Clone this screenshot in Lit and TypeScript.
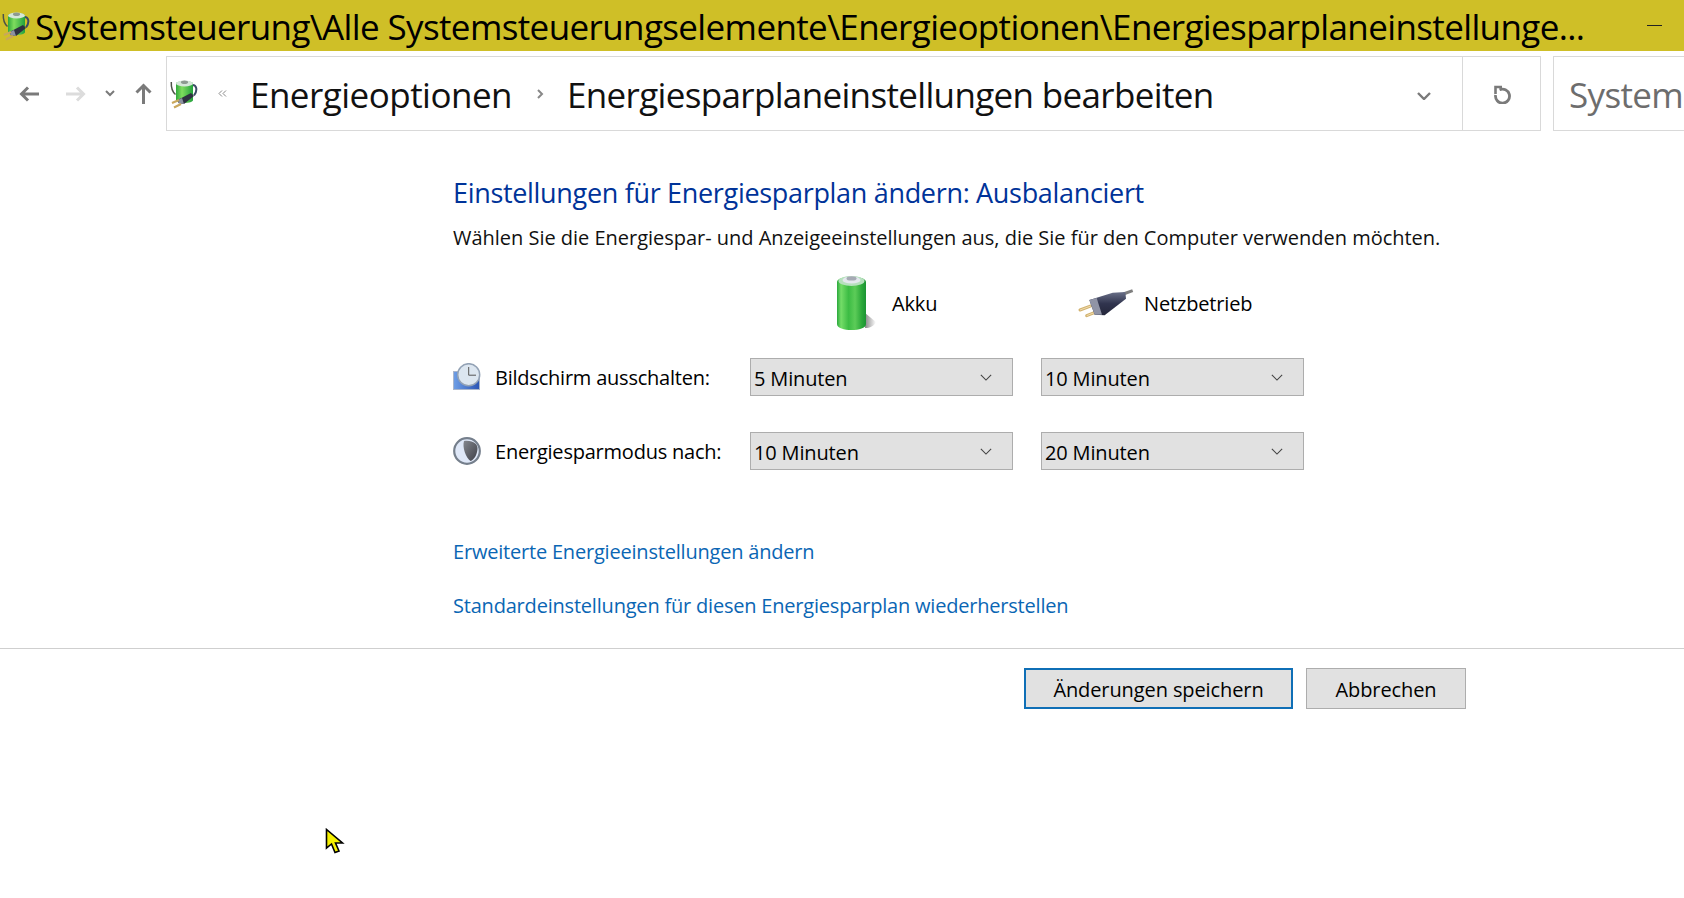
import { LitElement, html, css } from "lit";
import { customElement } from "lit/decorators.js";

const powerIcon = (id: string) => html`<svg width="28" height="30" viewBox="0 0 28 30">
  <defs>
    <linearGradient id="pb${id}" x1="0" x2="1" y1="0" y2="0"><stop offset="0" stop-color="#2fa83a"/><stop offset=".35" stop-color="#7fdc5e"/><stop offset="1" stop-color="#22a03c"/></linearGradient>
  </defs>
  <path d="M1.3 3 C1 9 2.5 13 5.5 15.5" fill="none" stroke="#4d5248" stroke-width="1.5"/>
  <path d="M22 6 C26.5 5.5 28 11 24 16.5" fill="none" stroke="#3c4a66" stroke-width="2"/>
  <path d="M6 4.5 C6 1.5 23 1.5 23 4.5 L23 21 C23 25 6 25 6 21 Z" fill="url(#pb${id})"/>
  <ellipse cx="14.5" cy="4.5" rx="8.5" ry="3" fill="#d5e6d8"/>
  <ellipse cx="14.5" cy="3.2" rx="3.6" ry="1.8" fill="#8d9a90"/>
  <path d="M8.5 20.5 L21 14 L24 17 L14 25 L8 24 Z" fill="#2e3140"/>
  <path d="M9 20.5 L12 19 L14 25 L8 24 Z" fill="#8c91a0"/>
  <path d="M2 24 L9 21 M4 28.5 L11 25" stroke="#c9a75c" stroke-width="2.2"/>
</svg>`;

@customElement("app-root")
export class AppRoot extends LitElement {
  static styles = css`
    :host { display: block; width: 1684px; height: 898px; overflow: hidden; position: relative; background: #fff;
      font-family: "Open Sans", "Noto Sans", sans-serif; color: #000; }
    .title { height: 51px; background: #cfbf27; display: flex; align-items: center; padding-left: 2px; box-sizing: border-box; }
    .title svg { flex: none; }
    .title .t { font-size: 35px; margin-left: 5px; white-space: nowrap; flex: 1; line-height: 51px; letter-spacing: -0.62px; padding-top: 2px; }
    .min { width: 15px; height: 1px; background: #222; margin-right: 22px; flex: none; }
    .nav { height: 75px; margin-top: 5px; display: flex; align-items: stretch; }
    .btns { width: 166px; flex: none; display: flex; align-items: center; padding-left: 19px; box-sizing: border-box; }
    .btns svg { flex: none; }
    .addr { width: 1375px; box-sizing: border-box; border: 1px solid #d9d9d9; display: flex; align-items: center; flex: none; }
    .crumbs { flex: 1; display: flex; align-items: center; padding-left: 3px; }
    .crumb { font-size: 35px; letter-spacing: -0.52px; white-space: nowrap; color: #111; padding-top: 2px; }
    .crumb.long { letter-spacing: -0.66px; }
    .dd { width: 77px; flex: none; align-self: stretch; border-left: 1px solid #d9d9d9; display: flex; align-items: center; justify-content: center; }
    .ddown { flex: none; margin-right: 31px; }
    .search { margin-left: 12px; flex: 1; border: 1px solid #d9d9d9; border-right: none; font-size: 35px; color: #6d6d6d; padding: 2px 0 0 15px; display: flex; align-items: center; overflow: hidden; white-space: nowrap; letter-spacing: -0.66px; }
    .main { padding: 44px 0 0 453px; }
    h1 { margin: 0; font-size: 27px; font-weight: 400; color: #003399; line-height: 36px; letter-spacing: -0.32px; }
    .desc { font-size: 20px; line-height: 28px; margin-top: 13px; letter-spacing: -0.02px; white-space: nowrap; color: #111; }
    .grid { display: grid; grid-template-columns: 269px 263px 263px; column-gap: 28px; margin-top: 23px; align-items: center; font-size: 20px; letter-spacing: -0.15px; width: max-content; }
    .head { height: 56px; display: flex; align-items: center; margin-bottom: 27px; }
    .h1c { padding-left: 86px; gap: 14px; }
    .h2c { padding-left: 37px; gap: 10px; }
    .label { display: flex; align-items: center; gap: 14px; height: 38px; white-space: nowrap; letter-spacing: -0.22px; }
    .label span { padding-top: 1px; }
    .sel { height: 38px; box-sizing: border-box; background: #e1e1e1; border: 1px solid #adadad; display: flex; align-items: center; justify-content: space-between; padding: 0 20px 0 3px; }
    .sel span { padding-top: 2px; }
    .r2 { margin-top: 36px; }
    .links { margin-top: 68px; display: flex; flex-direction: column; gap: 26px; }
    .links a { color: #0a66b4; font-size: 20px; line-height: 28px; letter-spacing: -0.2px; }
    .rule { height: 1px; background: #cfcfcf; margin-top: 28px; }
    .foot { display: flex; padding: 19px 0 0 1024px; gap: 13px; }
    .b { height: 41px; box-sizing: border-box; background: #e1e1e1; border: 1px solid #adadad; display: flex; align-items: center; justify-content: center; font-size: 20px; letter-spacing: -0.1px; width: 160px; padding-top: 1px; }
    .b.p { width: 269px; border: 2px solid #0f6fb6; }
    .cursor { position: absolute; left: 325px; top: 828px; }
  `;

  private chev(w: number, h: number, color: string, sw: number) {
    return html`<svg width=${w} height=${h} viewBox="0 0 14 8"><path d="M1 1 L7 7 L13 1" fill="none" stroke=${color} stroke-width=${sw}/></svg>`;
  }

  private select(v: string) {
    return html`<div class="sel"><span>${v}</span>${this.chev(12, 7, "#444", 1.3)}</div>`;
  }

  render() {
    return html`
      <div class="title">
        ${powerIcon("a")}
        <div class="t">Systemsteuerung\\Alle Systemsteuerungselemente\\Energieoptionen\\Energiesparplaneinstellunge...</div>
        <div class="min"></div>
      </div>
      <div class="nav">
        <div class="btns">
          <svg width="21" height="16" viewBox="0 0 21 16"><path d="M20 8 H3 M9 1.5 L2.5 8 L9 14.5" fill="none" stroke="#7a7a7a" stroke-width="3"/></svg>
          <svg style="margin-left:25px" width="21" height="16" viewBox="0 0 21 16"><path d="M1 8 H18 M12 1.5 L18.5 8 L12 14.5" fill="none" stroke="#dcdcdc" stroke-width="3"/></svg>
          <svg style="margin-left:19px" width="10" height="7" viewBox="0 0 10 7"><path d="M1 1 L5 5 L9 1" fill="none" stroke="#7a7a7a" stroke-width="2"/></svg>
          <svg style="margin-left:20px" width="17" height="21" viewBox="0 0 17 21"><path d="M8.5 21 V3 M1.5 9.5 L8.5 2.5 L15.5 9.5" fill="none" stroke="#7a7a7a" stroke-width="3"/></svg>
        </div>
        <div class="addr">
          <div class="crumbs">
            ${powerIcon("b")}
            <svg style="margin-left:20px" width="9" height="7" viewBox="0 0 9 7"><path d="M4 .5 L1 3.5 L4 6.5 M8 .5 L5 3.5 L8 6.5" fill="none" stroke="#888" stroke-width="1"/></svg>
            <span class="crumb" style="margin-left:23px">Energieoptionen</span>
            <svg style="margin-left:24px" width="8" height="10" viewBox="0 0 8 10"><path d="M2 1 L6 5 L2 9" fill="none" stroke="#888" stroke-width="2"/></svg>
            <span class="crumb long" style="margin-left:23px">Energiesparplaneinstellungen bearbeiten</span>
          </div>
          <div class="ddown">${this.chev(14, 8, "#7a7a7a", 2.4)}</div>
          <div class="dd"><svg width="20" height="20" viewBox="0 0 20 20"><path d="M7.5 5.8 A7 7 0 1 1 3.6 11" fill="none" stroke="#7a7a7a" stroke-width="2.8"/><path d="M3.5 10 V3 H10" fill="none" stroke="#7a7a7a" stroke-width="2.6"/></svg></div>
        </div>
        <div class="search">Systemsteuerung durchsuchen</div>
      </div>
      <div class="main">
        <h1>Einstellungen für Energiesparplan ändern: Ausbalanciert</h1>
        <div class="desc">Wählen Sie die Energiespar- und Anzeigeeinstellungen aus, die Sie für den Computer verwenden möchten.</div>
        <div class="grid">
          <div class="head"></div>
          <div class="head h1c">
            <svg width="42" height="56" viewBox="0 0 42 56">
              <defs>
                <linearGradient id="bat" x1="0" x2="1" y1="0" y2="0"><stop offset="0" stop-color="#2aa83c"/><stop offset=".14" stop-color="#74dd68"/><stop offset=".4" stop-color="#3cbc44"/><stop offset=".62" stop-color="#5ccc58"/><stop offset=".85" stop-color="#2ca93a"/><stop offset="1" stop-color="#1a9433"/></linearGradient>
                <linearGradient id="sh" x1="0" x2="1" y1="0" y2="0"><stop offset="0" stop-color="#8a8a8a"/><stop offset="1" stop-color="#fff"/></linearGradient>
              </defs>
              <path d="M29 38 L40 47 C38 51 34 53 29 53 Z" fill="url(#sh)"/>
              <path d="M1 7 C1 0 30 0 30 7 L30 49 C30 57 1 57 1 49 Z" fill="url(#bat)"/>
              <ellipse cx="15.5" cy="6" rx="13" ry="5" fill="#b6e0bd"/>
              <ellipse cx="15.5" cy="5" rx="9" ry="3.6" fill="#e4e8ee"/>
              <ellipse cx="15.5" cy="3.4" rx="5" ry="2.2" fill="#a6aab4"/>
            </svg>
            <span>Akku</span>
          </div>
          <div class="head h2c">
            <svg width="56" height="30" viewBox="24 22 168 90">
              <defs><linearGradient id="plug" x1="0" x2="0" y1="0" y2="1"><stop offset="0" stop-color="#6a7088"/><stop offset=".5" stop-color="#30344e"/><stop offset="1" stop-color="#24263a"/></linearGradient></defs>
              <path d="M160 40 L188 30" stroke="#7e7e7e" stroke-width="9"/>
              <path d="M65 75 L30 88 M75 95 L50 105" stroke="#d2b26e" stroke-width="9" stroke-linecap="round"/>
              <path d="M65 75 L30 88 M75 95 L50 105" stroke="#f0dcb0" stroke-width="3"/>
              <path d="M58 58 L128 36 L166 34 L168 54 L104 104 L74 102 Z" fill="url(#plug)"/>
              <path d="M58 58 L80 52 L96 102 L74 102 Z" fill="#9094a6"/>
            </svg>
            <span>Netzbetrieb</span>
          </div>
          <div class="label">
            <svg width="28" height="28" viewBox="0 0 28 28">
              <defs><linearGradient id="scr" x1="0" x2="1" y1="0" y2="0"><stop offset="0" stop-color="#6f9fe6"/><stop offset="1" stop-color="#2a54b4"/></linearGradient></defs>
              <rect x=".5" y="8.5" width="26" height="18" fill="url(#scr)" stroke="#aab6cc"/>
              <circle cx="15.7" cy="11.7" r="11" fill="#dce6f0" stroke="#93a2b5" stroke-width="1.5"/>
              <path d="M15.7 4 V12.2 H23" fill="none" stroke="#555" stroke-width="1"/>
            </svg>
            <span>Bildschirm ausschalten:</span>
          </div>
          ${this.select("5 Minuten")}
          ${this.select("10 Minuten")}
          <div class="label r2">
            <svg width="28" height="28" viewBox="0 0 28 28">
              <defs><linearGradient id="moon" x1="0" x2="1" y1="0" y2="1"><stop offset="0" stop-color="#84878e"/><stop offset="1" stop-color="#3e4048"/></linearGradient></defs>
              <circle cx="14" cy="14" r="12.8" fill="#dfe8f8" stroke="#757f8c" stroke-width="2.2"/>
              <path d="M11 4 C20 3 25 7 24.5 12 C24 18 21 23 17.5 24 C13 21 9 10 11 4 Z" fill="url(#moon)"/>
            </svg>
            <span>Energiesparmodus nach:</span>
          </div>
          <div class="r2">${this.select("10 Minuten")}</div>
          <div class="r2">${this.select("20 Minuten")}</div>
        </div>
        <div class="links">
          <a>Erweiterte Energieeinstellungen ändern</a>
          <a>Standardeinstellungen für diesen Energiesparplan wiederherstellen</a>
        </div>
      </div>
      <div class="rule"></div>
      <div class="foot">
        <div class="b p">Änderungen speichern</div>
        <div class="b">Abbrechen</div>
      </div>
      <svg class="cursor" width="20" height="28" viewBox="0 0 20 28"><path d="M1.5 1.5 L1.5 20 L6.5 16 L10 24.5 L14 23 L10.5 15 L17.5 15 Z" fill="#f5f000" stroke="#000" stroke-width="1.6"/></svg>
    `;
  }
}
